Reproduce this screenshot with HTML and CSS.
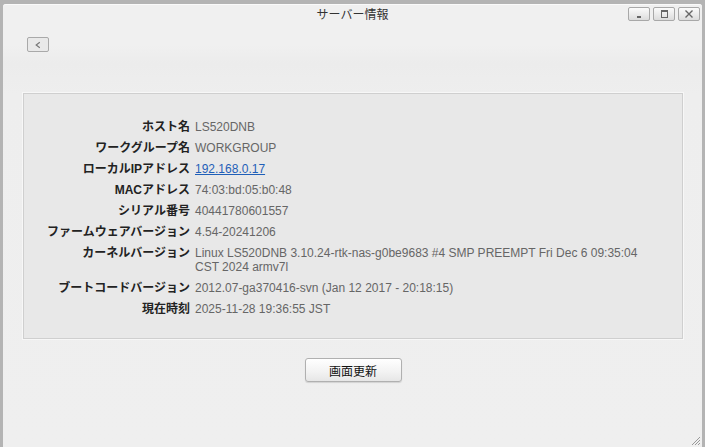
FILE: index.html
```html
<!DOCTYPE html>
<html lang="ja">
<head>
<meta charset="utf-8">
<title>サーバー情報</title>
<link rel="stylesheet" href="styles.css">
</head>
<body>
<div class="window">
  <div class="titlebar">
    <span class="spacer"></span>
    <span class="title">サーバー情報</span>
    <div class="controls">
      <span class="ctl"><svg width="22" height="14" viewBox="0 0 22 14"><rect x="9" y="9" width="4" height="2" fill="#666"/></svg></span>
      <span class="ctl"><svg width="22" height="14" viewBox="0 0 22 14"><rect x="8.5" y="3.5" width="6" height="7" fill="none" stroke="#666" stroke-width="1"/><rect x="8.5" y="3.5" width="6" height="1.5" fill="#666"/></svg></span>
      <span class="ctl"><svg width="22" height="14" viewBox="0 0 22 14"><path d="M7.5 3.5 L14.5 10.5 M14.5 3.5 L7.5 10.5" stroke="#666" stroke-width="1.4"/></svg></span>
    </div>
  </div>
  <div class="toolbar">
    <span class="back"><svg width="22" height="14" viewBox="0 0 22 14"><path d="M13 4 L9 7 L13 10" fill="none" stroke="#777" stroke-width="1.3"/></svg></span>
  </div>
  <div class="content">
    <div class="panel">
      <div class="info">
        <div class="label">ホスト名</div><div class="value">LS520DNB</div>
        <div class="label">ワークグループ名</div><div class="value">WORKGROUP</div>
        <div class="label">ローカルIPアドレス</div><div class="value"><a class="link" href="#">192.168.0.17</a></div>
        <div class="label">MACアドレス</div><div class="value">74:03:bd:05:b0:48</div>
        <div class="label">シリアル番号</div><div class="value">40441780601557</div>
        <div class="label">ファームウェアバージョン</div><div class="value">4.54-20241206</div>
        <div class="label">カーネルバージョン</div><div class="value">Linux LS520DNB 3.10.24-rtk-nas-g0be9683 #4 SMP PREEMPT Fri Dec 6 09:35:04 CST 2024 armv7l</div>
        <div class="label">ブートコードバージョン</div><div class="value">2012.07-ga370416-svn (Jan 12 2017 - 20:18:15)</div>
        <div class="label">現在時刻</div><div class="value">2025-11-28 19:36:55 JST</div>
      </div>
    </div>
    <div class="actions">
      <span class="refresh">画面更新</span>
    </div>
  </div>
  <span class="grip"><svg width="12" height="12" viewBox="0 0 12 12"><path d="M11 3 L3 11 M11 6 L6 11 M11 9 L9 11" stroke="#999" stroke-width="1"/></svg></span>
</div>
</body>
</html>
```

FILE: styles.css
```css
html, body {
  margin: 0;
  padding: 0;
}
body {
  width: 705px;
  height: 447px;
  overflow: hidden;
  background: #b4b4b4;
  font-family: "Liberation Sans", Arial, "Noto Sans CJK JP", sans-serif;
  font-size: 12px;
  box-sizing: border-box;
  padding: 4px 3px 0 3px;
  display: flex;
}
.window {
  position: relative;
  flex: 1;
  background: #f0f0f0;
  border-top-left-radius: 3px;
  border-top-right-radius: 3px;
  display: flex;
  flex-direction: column;
  box-shadow: inset 0 1px 0 #fafafa;
}
.titlebar {
  height: 20px;
  display: grid;
  grid-template-columns: 1fr auto 1fr;
  align-items: center;
}
.title {
  color: #333;
  font-size: 12px;
  font-family: "Noto Sans CJK JP", sans-serif;
  letter-spacing: 0;
  line-height: 20px;
  padding-top: 0;
}
.controls {
  display: flex;
  justify-content: flex-end;
  gap: 3px;
  padding-right: 2px;
}
.ctl {
  width: 22px;
  height: 14px;
  box-sizing: border-box;
  border: 1px solid #a8a8a8;
  border-radius: 2px;
  background: linear-gradient(#fbfbfb, #dcdcdc);
  display: flex;
  align-items: center;
  justify-content: center;
  overflow: hidden;
}
.ctl svg { display: block; flex: none; }
.toolbar {
  height: 40px;
  padding: 13px 0 0 24px;
  box-sizing: border-box;
  background: linear-gradient(#f0f0f0 0, #f0f0f0 55%, #ececec 100%);
  border-bottom: 1px solid #ececec;
}
.back {
  display: flex;
  width: 22px;
  height: 15px;
  box-sizing: border-box;
  border: 1px solid #a9a9a9;
  border-radius: 2px;
  background: #e9e9e9;
  align-items: center;
  justify-content: center;
  overflow: hidden;
}
.content {
  flex: 1;
  background: linear-gradient(#ececec 0, #eeeeee 30px, #efefef 100%);
  padding: 29px 19px 0 20px;
  display: flex;
  flex-direction: column;
}
.panel {
  height: 246px;
  box-sizing: border-box;
  background: #e8e8e8;
  border: 1px solid #cfcfcf;
  box-shadow: 0 0 0 1px #f7f7f7;
  padding: 22px 0 0 0;
}
.info {
  display: grid;
  grid-template-columns: 166px 460px;
  column-gap: 5px;
  align-items: start;
}
.label, .value {
  padding: 3.5px 0;
  line-height: 14px;
}
.label {
  text-align: right;
  font-weight: bold;
  color: #222;
  font-family: "Liberation Sans", Arial, "Noto Sans CJK JP", sans-serif;
}
.value {
  color: #666;
}
.link {
  color: #1f5fb8;
  text-decoration: underline;
}
.actions {
  display: flex;
  justify-content: center;
  padding-top: 19px;
}
.refresh {
  width: 97px;
  height: 24px;
  box-sizing: border-box;
  border: 1px solid #b0b0b0;
  border-radius: 3px;
  background: linear-gradient(#ffffff, #f2f2f2 60%, #e6e6e6);
  box-shadow: 0 1px 1px rgba(0,0,0,0.12);
  color: #111;
  font-size: 12px;
  font-family: "Noto Sans CJK JP", sans-serif;
  display: flex;
  align-items: center;
  justify-content: center;
}
.grip {
  position: absolute;
  right: 1px;
  bottom: 1px;
  width: 12px;
  height: 12px;
}
.grip svg { display: block; }
```
